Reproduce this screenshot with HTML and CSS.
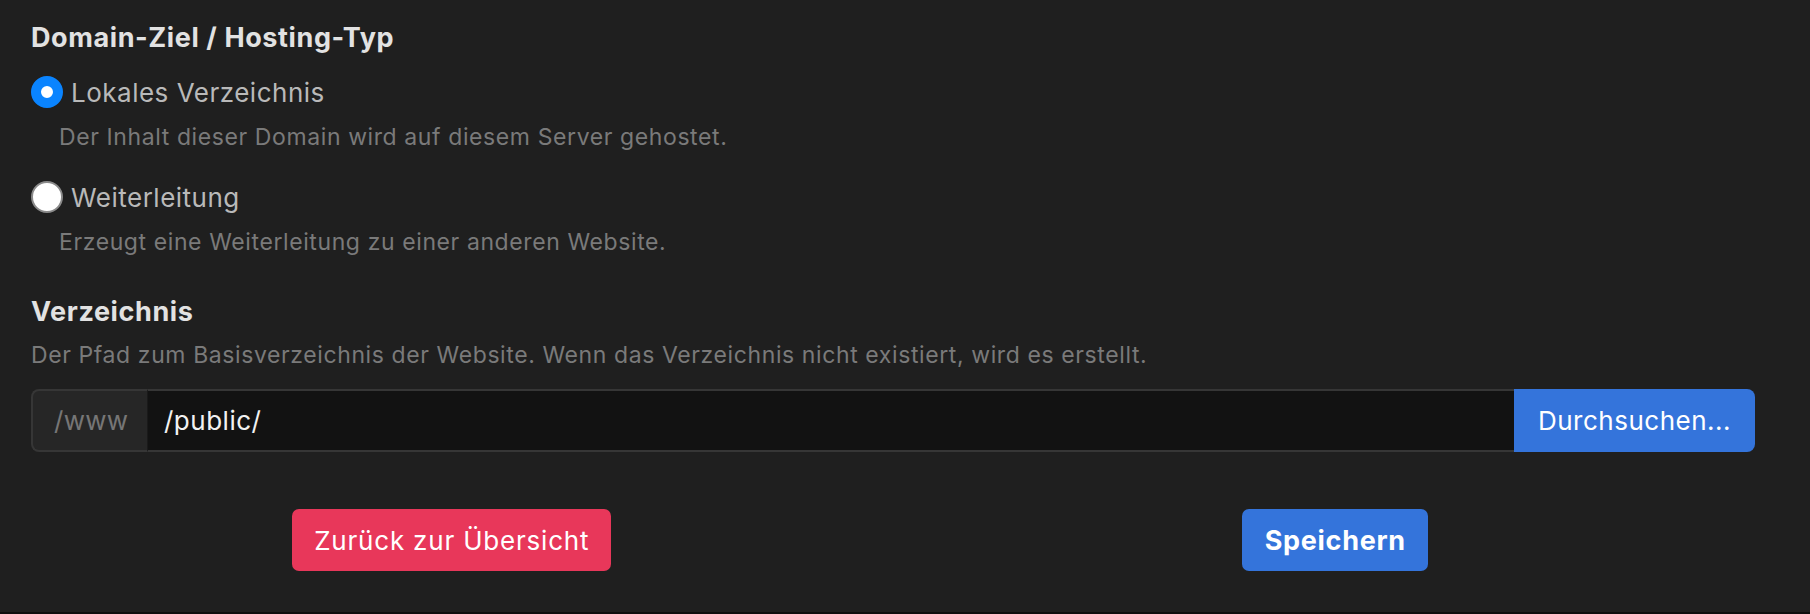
FILE: index.html
```html
<!DOCTYPE html>
<html lang="de">
<head>
    <meta charset="UTF-8">
    <meta name="viewport" content="width=device-width, initial-scale=1.0">
    <title>Domain bearbeiten</title>
    <link rel="stylesheet" href="styles.css">
</head>
<body>
    <div class="page">
        <form class="domain-form">
            <h2 class="field-title">Domain-Ziel / Hosting-Typ</h2>

            <label class="option">
                <input type="radio" name="hosting" value="local" checked>
                <span class="option-label">Lokales Verzeichnis</span>
            </label>
            <p class="hint hint-option">Der Inhalt dieser Domain wird auf diesem Server gehostet.</p>

            <label class="option option-second">
                <input type="radio" name="hosting" value="redirect">
                <span class="option-label">Weiterleitung</span>
            </label>
            <p class="hint hint-option">Erzeugt eine Weiterleitung zu einer anderen Website.</p>

            <h2 class="field-title field-title-dir">Verzeichnis</h2>
            <p class="hint hint-dir">Der Pfad zum Basisverzeichnis der Website. Wenn das Verzeichnis nicht existiert, wird es erstellt.</p>

            <div class="input-group">
                <span class="input-prefix">/www</span>
                <input class="input-path" type="text" value="/public/">
                <button type="button" class="btn btn-browse">Durchsuchen...</button>
            </div>

            <div class="actions">
                <div class="action-cell">
                    <button type="button" class="btn btn-back">Zurück zur Übersicht</button>
                </div>
                <div class="action-cell">
                    <button type="submit" class="btn btn-save">Speichern</button>
                </div>
            </div>
        </form>
    </div>
</body>
</html>
```

FILE: styles.css
```css
body {
    margin: 0;
    background-color: #1f1f1f;
    font-family: Inter, "Noto Sans", sans-serif;
    color: #bdbdbd;
}
.page {
    height: 612px;
    border-bottom: 2px solid #0e0e0e;
    overflow: hidden;
}
.domain-form {
    padding: 22px 55px 0 31px;
}
.field-title {
    margin: 0;
    font-size: 27px;
    line-height: 32px;
    font-weight: 700;
    letter-spacing: 0.6px;
    color: #e2e2e2;
}
.field-title-dir {
    margin-top: 40px;
}
.option {
    display: flex;
    align-items: center;
    gap: 8px;
    height: 32px;
    margin-top: 22px;
    cursor: pointer;
}
.option-second {
    margin-top: 30px;
}
.option input {
    appearance: none;
    -webkit-appearance: none;
    width: 32px;
    height: 32px;
    margin: 0;
    border-radius: 50%;
    background-color: #fff;
    border: 2px solid #8a8a8a;
    flex-shrink: 0;
}
.option input:checked {
    border: 10px solid #0a84ff;
    background-color: #fff;
}
.option-label {
    font-size: 26px;
    line-height: 32px;
    letter-spacing: 0.5px;
    color: #b9b9b9;
    padding-top: 2px;
}
.hint {
    margin: 0;
    font-size: 23px;
    line-height: 28px;
    letter-spacing: 0.6px;
    color: #7a7a7a;
}
.hint-option {
    margin-top: 15px;
    padding-left: 28px;
}
.hint-dir {
    margin-top: 13px;
}
.input-group {
    display: flex;
    height: 63px;
    margin-top: 20px;
    box-sizing: border-box;
}
.input-prefix {
    display: flex;
    align-items: center;
    padding: 0 20px 0 21px;
    width: 117px;
    box-sizing: border-box;
    background-color: #262626;
    border: 2px solid #363636;
    border-right: 1px solid #1a1a1a;
    border-radius: 8px 0 0 8px;
    font-size: 26px;
    letter-spacing: 0.3px;
    color: #767676;
}
.input-path {
    flex: 1;
    min-width: 0;
    margin: 0;
    padding: 0 16px;
    background-color: #121212;
    border: 2px solid #363636;
    border-left: none;
    border-right: none;
    outline: none;
    font-family: inherit;
    font-size: 26px;
    letter-spacing: 0.5px;
    color: #f2f2f2;
}
.btn {
    font-family: inherit;
    font-size: 26px;
    letter-spacing: 0.5px;
    color: #fff;
    border: none;
    cursor: pointer;
    padding: 0;
}
.btn-browse {
    background-color: #3474db;
    border-radius: 0 8px 8px 0;
    width: 241px;
}
.actions {
    display: grid;
    grid-template-columns: 1fr 1fr;
    width: 1767px;
    margin: 57px 0 0 -21px;
}
.action-cell {
    display: flex;
    justify-content: center;
}
.btn-back,
.btn-save {
    height: 62px;
    border-radius: 7px;
}
.btn-back {
    background-color: #e8375a;
    width: 319px;
    letter-spacing: 0.8px;
}
.btn-save {
    background-color: #3474db;
    font-size: 27px;
    font-weight: 700;
    letter-spacing: 0.7px;
    width: 186px;
}
```
